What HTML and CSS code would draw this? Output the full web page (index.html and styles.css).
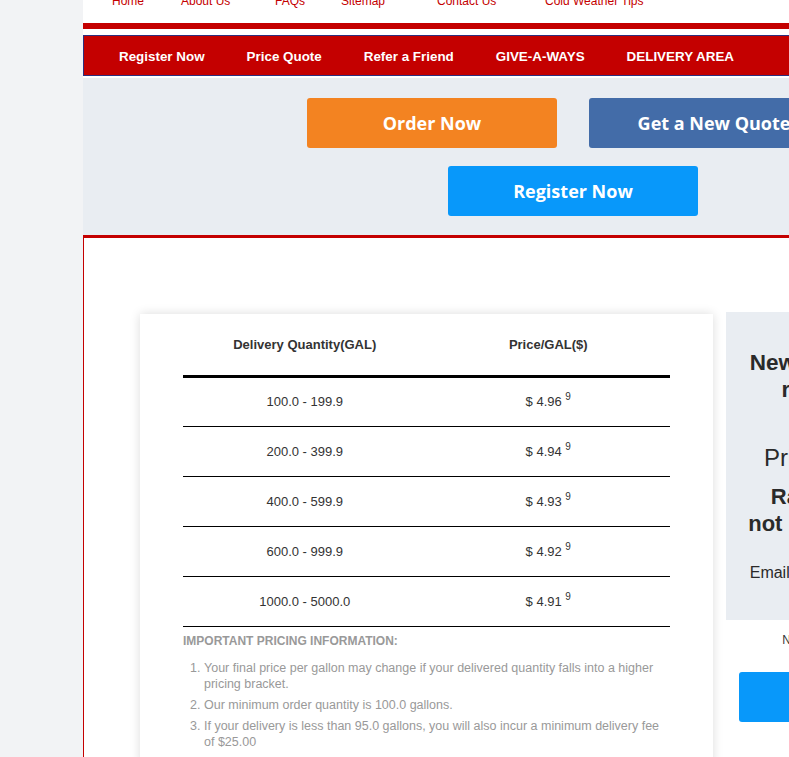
FILE: index.html
```html
<!DOCTYPE html>
<html lang="en">
<head>
<meta charset="utf-8">
<title>Price Quote</title>
<link rel="stylesheet" href="styles.css">
</head>
<body>
<div class="page">
  <ul class="toplinks">
    <li><a href="#">Home</a></li>
    <li><a href="#">About Us</a></li>
    <li><a href="#">FAQs</a></li>
    <li><a href="#">Sitemap</a></li>
    <li><a href="#">Contact Us</a></li>
    <li><a href="#">Cold Weather Tips</a></li>
  </ul>
  <div class="redbar"></div>
  <nav class="mainnav">
    <a href="#">Register Now</a>
    <a href="#">Price Quote</a>
    <a href="#">Refer a Friend</a>
    <a href="#">GIVE-A-WAYS</a>
    <a href="#">DELIVERY AREA</a>
  </nav>
  <section class="cta">
    <div class="cta-row">
      <a href="#" class="btn btn-orange">Order Now</a>
      <a href="#" class="btn btn-steel">Get a New Quote</a>
    </div>
    <div class="cta-row">
      <a href="#" class="btn btn-sky">Register Now</a>
    </div>
  </section>
  <main class="content">
    <div class="card">
      <table class="prices">
        <thead>
          <tr><th>Delivery Quantity(GAL)</th><th>Price/GAL($)</th></tr>
        </thead>
        <tbody>
          <tr><td>100.0 - 199.9</td><td>$ 4.96 <sup>9</sup></td></tr>
          <tr><td>200.0 - 399.9</td><td>$ 4.94 <sup>9</sup></td></tr>
          <tr><td>400.0 - 599.9</td><td>$ 4.93 <sup>9</sup></td></tr>
          <tr><td>600.0 - 999.9</td><td>$ 4.92 <sup>9</sup></td></tr>
          <tr><td>1000.0 - 5000.0</td><td>$ 4.91 <sup>9</sup></td></tr>
        </tbody>
      </table>
      <div class="info">
        <h4 class="info-title">IMPORTANT PRICING INFORMATION:</h4>
        <ol class="info-list">
          <li>Your final price per gallon may change if your delivered quantity falls into a higher pricing bracket.</li>
          <li>Our minimum order quantity is 100.0 gallons.</li>
          <li>If your delivery is less than 95.0 gallons, you will also incur a minimum delivery fee of $25.00</li>
        </ol>
      </div>
    </div>
    <aside class="side">
      <div class="side-panel">
        <h3 class="side-title">New customers need to<br>register to buy oil</h3>
        <p class="side-lead">Price Protection Plan</p>
        <p class="side-strong">Rates you can trust,<br>not <span class="orange">hidden surprise fees</span></p>
        <p class="side-email">Email us today for more information</p>
      </div>
      <p class="side-note">Not a member yet? Register below.</p>
      <a href="#" class="side-btn">Register Now</a>
    </aside>
  </main>
</div>
</body>
</html>
```
FILE: styles.css
```css
* { box-sizing: border-box; }
html, body { margin: 0; padding: 0; }
body {
  background: #f2f3f5;
  overflow: hidden;
  font-family: "Liberation Sans", Arial, sans-serif;
}
a { text-decoration: none; }

.page {
  margin-left: 83px;
  width: 980px;
  background: #fff;
  min-height: 800px;
}

.toplinks {
  list-style: none;
  margin: -6px 0 0 0;
  padding: 0 0 0 29px;
  height: 29px;
  display: grid;
  grid-template-columns: 69px 94px 66px 96px 108px auto;
  font-size: 12px;
  line-height: 14px;
}
.toplinks a { color: #c40000; }

.redbar {
  height: 6px;
  background: #c40000;
  margin-bottom: 6px;
}

.mainnav {
  height: 41px;
  background: #c40000;
  border: 1px solid #2e2f7e;
  display: flex;
  align-items: center;
  gap: 42px;
  padding: 2px 0 0 35px;
  margin-bottom: 2px;
}
.mainnav a {
  color: #fff;
  font-weight: bold;
  font-size: 13.4px;
}

.cta {
  background: #e9edf2;
  padding: 20px 0 19px;
  border-bottom: 3px solid #c40000;
  display: flex;
  flex-direction: column;
  align-items: center;
  gap: 18px;
}
.cta-row {
  display: flex;
  gap: 32px;
}
.btn {
  width: 250px;
  height: 50px;
  border-radius: 3px;
  display: flex;
  align-items: center;
  justify-content: center;
  color: #fff;
  font-family: "Open Sans", sans-serif;
  font-weight: 700;
  font-size: 18px;
}
.btn-orange { background: #f38321; }
.btn-steel { background: #436ca8; }
.btn-sky { background: #0898fa; }

.content {
  border-left: 1px solid #c40000;
  padding: 76px 0 40px 56px;
  display: flex;
  align-items: flex-start;
  gap: 13px;
}

.card {
  width: 573px;
  background: #fff;
  box-shadow: 0 0 10px rgba(0, 0, 0, 0.14);
  padding: 0 43px 10px;
}
.prices {
  width: 100%;
  border-collapse: collapse;
  table-layout: fixed;
  color: #333;
  font-size: 13px;
}
.prices th {
  height: 62px;
  font-weight: bold;
  border-bottom: 3px solid #000;
  text-align: center;
  padding: 0;
}
.prices td {
  height: 50px;
  border-bottom: 1px solid #000;
  text-align: center;
  padding: 0;
}
.prices sup {
  font-size: 10px;
  vertical-align: 6px;
  line-height: 0;
}

.info { color: #999; font-size: 12.5px; }
.info-title {
  margin: 6px 0 0;
  font-size: 12px;
  line-height: 16px;
  font-weight: bold;
}
.info-list {
  margin: 11px 0 0;
  padding-left: 21px;
  line-height: 16px;
}
.info-list li { margin-bottom: 5px; }

.side {
  width: 300px;
  margin-top: -2px;
  display: flex;
  flex-direction: column;
}
.side-panel {
  background: #e9edf2;
  height: 308px;
  padding: 37px 10px 0;
  text-align: center;
  color: #2a2a2a;
}
.side-title {
  margin: 0;
  font-size: 22.5px;
  line-height: 27px;
  font-weight: bold;
}
.side-lead {
  margin: 40px 0 0;
  font-size: 24px;
  line-height: 30px;
}
.side-strong {
  margin: 10px 0 0;
  font-size: 22px;
  line-height: 27px;
  font-weight: bold;
}
.orange { color: #f38321; }
.side-email {
  margin: 26px 0 0;
  font-size: 16px;
  line-height: 20px;
}
.side-note {
  margin: 12px 0 0;
  text-align: center;
  font-size: 12px;
  line-height: 16px;
  color: #333;
}
.side-btn {
  margin: 24px 13px 0;
  height: 50px;
  border-radius: 3px;
  background: #0898fa;
  color: #fff;
  display: flex;
  align-items: center;
  justify-content: center;
  font-family: "Open Sans", sans-serif;
  font-weight: 700;
  font-size: 18px;
}
```
